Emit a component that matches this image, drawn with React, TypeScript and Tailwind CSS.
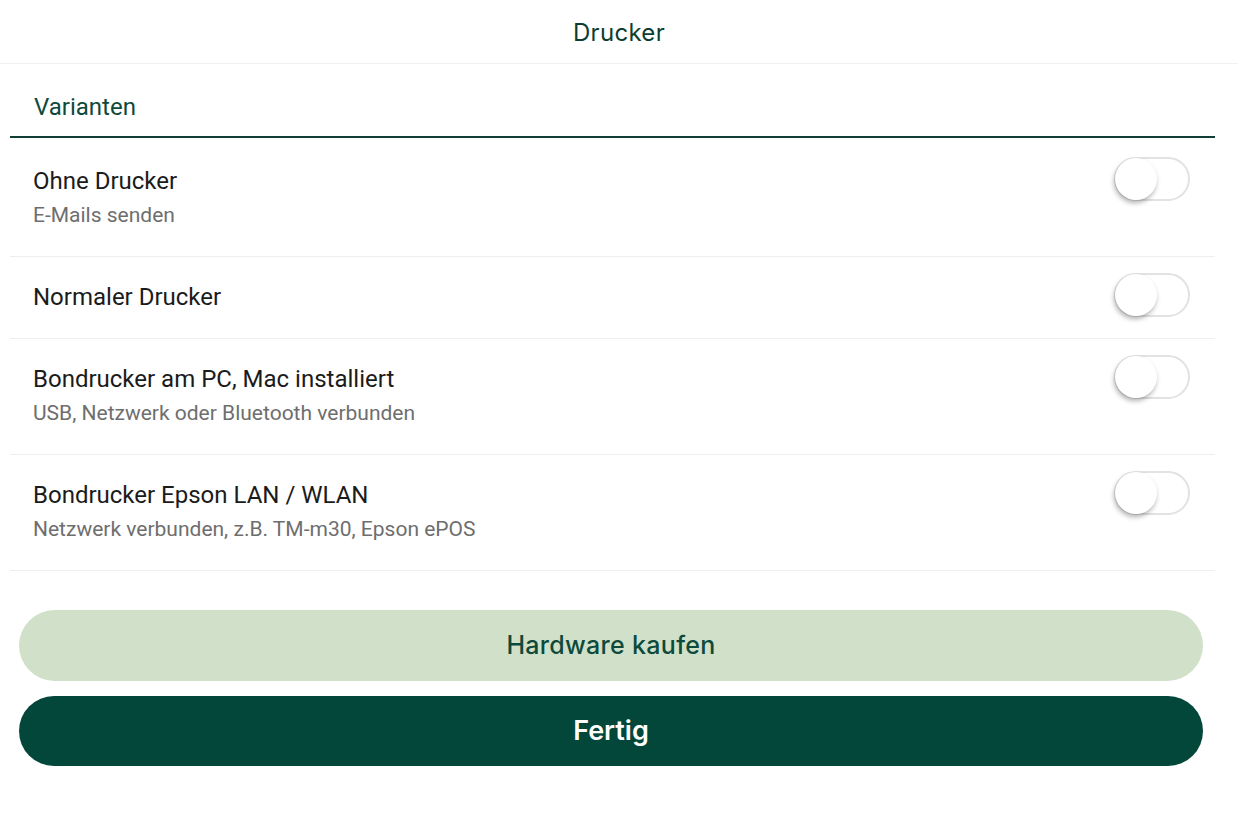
import React from 'react';

const options = [
  { title: 'Ohne Drucker', subtitle: 'E-Mails senden' },
  { title: 'Normaler Drucker' },
  { title: 'Bondrucker am PC, Mac installiert', subtitle: 'USB, Netzwerk oder Bluetooth verbunden' },
  { title: 'Bondrucker Epson LAN / WLAN', subtitle: 'Netzwerk verbunden, z.B. TM-m30, Epson ePOS' },
];

function Toggle() {
  return (
    <div className="-mb-1 -mt-2 mr-[25px] flex h-[44px] w-[76px] shrink-0 items-center rounded-full border-2 border-[#e2e2e2] bg-white">
      <div className="-ml-[1px] h-[42px] w-[42px] rounded-full bg-white shadow-[-1px_3px_5px_rgba(0,0,0,0.3)]" />
    </div>
  );
}

export default function App() {
  return (
    <div className="min-h-screen bg-white font-['Roboto',sans-serif]">
      <header className="flex h-[64px] items-center justify-center border-b border-[#f0f0f0]">
        <h1 className="pt-[2px] font-['Inter',sans-serif] text-[24px] font-normal tracking-[0.3px] text-[#0b3d30]">Drucker</h1>
      </header>

      <div className="ml-[10px] mr-[23px]">
        <div className="border-b-2 border-[#0f3f35] px-6 pb-[15px] pt-[29px] text-[24px] leading-[28px] text-[#0d4a3c]">
          Varianten
        </div>

        {options.map((opt, i) => (
          <div
            key={opt.title}
            className={`flex items-start justify-between border-b border-[#eeeeee] ${i === 0 ? 'pt-[27px]' : 'pt-6'} ${opt.subtitle ? 'pb-6' : 'pb-[25px]'}`}
          >
            <div className="pl-[23px]">
              <div className="text-[24px] leading-[32px] text-[#1b1b1b]">{opt.title}</div>
              {opt.subtitle && (
                <div className="mb-[3px] mt-[4px] text-[21px] leading-[28px] text-[#6e6e6e]">{opt.subtitle}</div>
              )}
            </div>
            <Toggle />
          </div>
        ))}
      </div>

      <div className="ml-[19px] mr-[35px] mt-[39px] flex flex-col gap-[15px]">
        <button className="h-[71px] rounded-full bg-[#d1e1c9] font-['Inter',sans-serif] text-[25px] font-medium tracking-[0.3px] text-[#0d4a3c]">
          Hardware kaufen
        </button>
        <button className="h-[70px] rounded-full bg-[#03463a] font-['Inter',sans-serif] text-[27px] font-semibold text-white">
          Fertig
        </button>
      </div>
    </div>
  );
}
